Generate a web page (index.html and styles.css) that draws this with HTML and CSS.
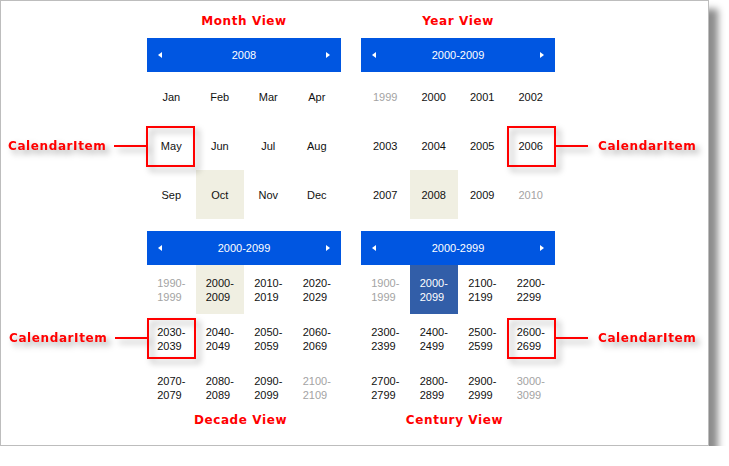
FILE: index.html
```html
<!DOCTYPE html>
<html>
<head>
<meta charset="utf-8">
<link rel="stylesheet" href="styles.css">
</head>
<body>
<div class="frame">
  <div class="grid">
    <div class="panel">
      <div class="title top">Month View</div>
      <div class="cal">
        <div class="head"><span class="arr left"></span><span class="ht">2008</span><span class="arr right"></span></div>
        <div class="cells">
          <div class="c">Jan</div><div class="c">Feb</div><div class="c">Mar</div><div class="c">Apr</div>
          <div class="c">May</div><div class="c">Jun</div><div class="c">Jul</div><div class="c">Aug</div>
          <div class="c">Sep</div><div class="c today">Oct</div><div class="c">Nov</div><div class="c">Dec</div>
        </div>
      </div>
    </div>
    <div class="panel">
      <div class="title top">Year View</div>
      <div class="cal">
        <div class="head"><span class="arr left"></span><span class="ht">2000-2009</span><span class="arr right"></span></div>
        <div class="cells">
          <div class="c dim">1999</div><div class="c">2000</div><div class="c">2001</div><div class="c">2002</div>
          <div class="c">2003</div><div class="c">2004</div><div class="c">2005</div><div class="c">2006</div>
          <div class="c">2007</div><div class="c today">2008</div><div class="c">2009</div><div class="c dim">2010</div>
        </div>
      </div>
    </div>
    <div class="panel">
      <div class="cal">
        <div class="head"><span class="arr left"></span><span class="ht">2000-2099</span><span class="arr right"></span></div>
        <div class="cells">
          <div class="c dim"><span class="two">1990-<br>1999</span></div><div class="c today"><span class="two">2000-<br>2009</span></div><div class="c"><span class="two">2010-<br>2019</span></div><div class="c"><span class="two">2020-<br>2029</span></div>
          <div class="c"><span class="two">2030-<br>2039</span></div><div class="c"><span class="two">2040-<br>2049</span></div><div class="c"><span class="two">2050-<br>2059</span></div><div class="c"><span class="two">2060-<br>2069</span></div>
          <div class="c"><span class="two">2070-<br>2079</span></div><div class="c"><span class="two">2080-<br>2089</span></div><div class="c"><span class="two">2090-<br>2099</span></div><div class="c dim"><span class="two">2100-<br>2109</span></div>
        </div>
      </div>
      <div class="title bottom">Decade View</div>
    </div>
    <div class="panel">
      <div class="cal">
        <div class="head"><span class="arr left"></span><span class="ht">2000-2999</span><span class="arr right"></span></div>
        <div class="cells">
          <div class="c dim"><span class="two">1900-<br>1999</span></div><div class="c selected"><span class="two">2000-<br>2099</span></div><div class="c"><span class="two">2100-<br>2199</span></div><div class="c"><span class="two">2200-<br>2299</span></div>
          <div class="c"><span class="two">2300-<br>2399</span></div><div class="c"><span class="two">2400-<br>2499</span></div><div class="c"><span class="two">2500-<br>2599</span></div><div class="c"><span class="two">2600-<br>2699</span></div>
          <div class="c"><span class="two">2700-<br>2799</span></div><div class="c"><span class="two">2800-<br>2899</span></div><div class="c"><span class="two">2900-<br>2999</span></div><div class="c dim"><span class="two">3000-<br>3099</span></div>
        </div>
      </div>
      <div class="title bottom">Century View</div>
    </div>
  </div>

  <div class="callout co-month"><span class="ct">CalendarItem</span><span class="line"></span><span class="box"></span></div>
  <div class="callout co-year"><span class="box"></span><span class="line"></span><span class="ct">CalendarItem</span></div>
  <div class="callout co-decade"><span class="ct">CalendarItem</span><span class="line"></span><span class="box"></span></div>
  <div class="callout co-century"><span class="box"></span><span class="line"></span><span class="ct">CalendarItem</span></div>
</div>
</body>
</html>
```

FILE: styles.css
```css
html, body {
  margin: 0;
  padding: 0;
  background: #ffffff;
}
body {
  font-family: "Liberation Sans", Arial, sans-serif;
}
.frame {
  position: relative;
  width: 707px;
  height: 444px;
  border: 1px solid #bdbdbd;
  background: #ffffff;
  box-shadow: 9px 9px 7px rgba(0, 0, 0, 0.45);
  box-sizing: content-box;
}
.grid {
  display: grid;
  grid-template-columns: 194px 194px;
  column-gap: 20px;
  row-gap: 12px;
  padding: 11px 0 0 146px;
}
.panel {
  display: flex;
  flex-direction: column;
}
.title {
  color: #ff0000;
  font-family: "DejaVu Sans", Verdana, sans-serif;
  font-weight: bold;
  font-size: 12px;
  letter-spacing: 0.6px;
  text-align: center;
}
.title.top {
  line-height: 18px;
  margin-bottom: 8px;
}
.title.bottom {
  line-height: 14px;
  padding-top: 1px;
  padding-right: 7px;
}
.cal {
  width: 194px;
}
.head {
  height: 34px;
  background: #0056e1;
  display: flex;
  align-items: center;
  justify-content: space-between;
  padding: 0 11px;
  box-sizing: border-box;
}
.ht {
  color: #ffffff;
  font-size: 11px;
}
.arr {
  width: 0;
  height: 0;
  border-top: 3.5px solid transparent;
  border-bottom: 3.5px solid transparent;
}
.arr.left {
  border-right: 4px solid #ffffff;
}
.arr.right {
  border-left: 4px solid #ffffff;
}
.cells {
  display: grid;
  grid-template-columns: repeat(4, 1fr);
  grid-auto-rows: 49px;
}
.c {
  display: flex;
  align-items: center;
  justify-content: center;
  font-size: 11px;
  color: #111111;
}
.c.dim {
  color: #a3a3a3;
}
.c.today {
  background: #f0efe2;
}
.c.selected {
  background: #325ea8;
  color: #ffffff;
}
.two {
  display: inline-block;
  text-align: left;
  line-height: 13.5px;
  padding-top: 2px;
}
.callout {
  position: absolute;
  display: flex;
  align-items: center;
  filter: drop-shadow(4px 4px 3px rgba(0, 0, 0, 0.35));
}
.ct {
  color: #ff0000;
  font-family: "DejaVu Sans", Verdana, sans-serif;
  font-weight: bold;
  font-size: 12px;
  letter-spacing: 0.6px;
  margin-top: -2px;
}
.line {
  width: 32px;
  height: 2px;
  background: #ff0000;
  margin-top: -2px;
}
.box {
  width: 49px;
  height: 41px;
  border: 2px solid #ff0000;
  box-sizing: border-box;
}
.co-month .ct, .co-decade .ct {
  margin-right: 8px;
}
.co-year .ct, .co-century .ct {
  margin-left: 10px;
}
.co-month {
  left: 7px;
  top: 125px;
}
.co-year {
  left: 506px;
  top: 125px;
}
.co-decade {
  left: 8px;
  top: 317px;
}
.co-century {
  left: 506px;
  top: 317px;
}
```
